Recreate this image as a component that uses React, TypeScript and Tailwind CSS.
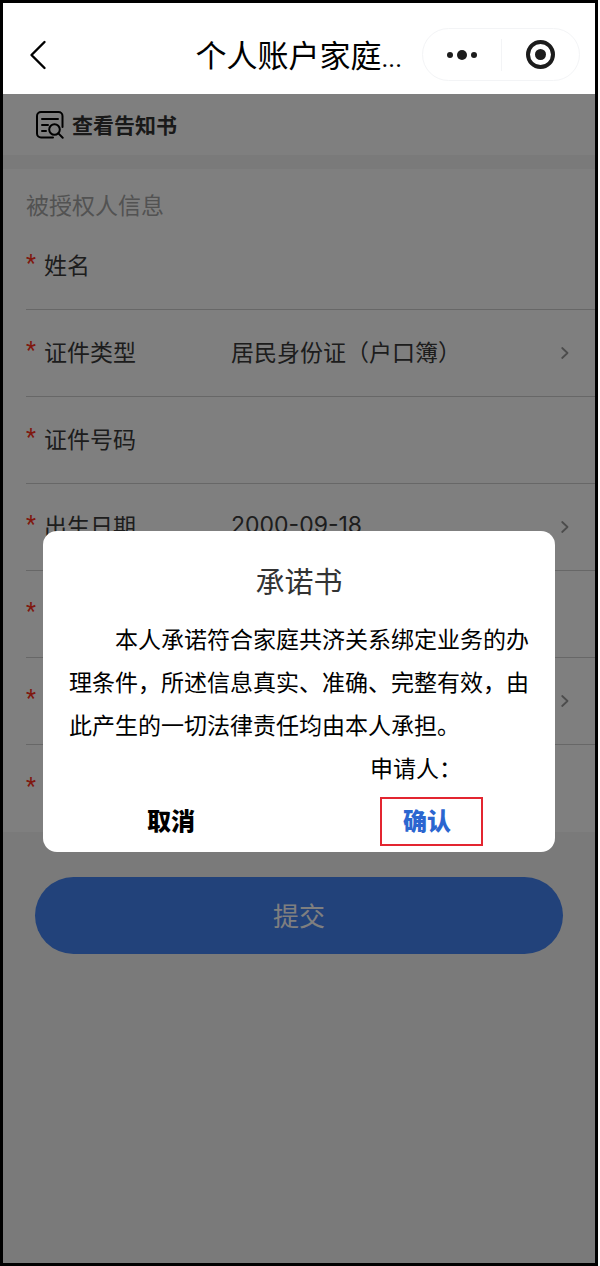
import React, { useState } from 'react';

const BackIcon = () => (
  <svg width="18" height="30" viewBox="0 0 18 30" fill="none" stroke="#000" strokeWidth="2.4" strokeLinecap="round" strokeLinejoin="round">
    <path d="M15.5 2 L2.5 15 L15.5 28" />
  </svg>
);

const NoticeIcon = () => (
  <svg width="28" height="28" viewBox="0 0 28 28" fill="none" stroke="#000" strokeWidth="2" strokeLinecap="round" strokeLinejoin="round">
    <path d="M17 26.5H5a4 4 0 0 1-4-4V5a4 4 0 0 1 4-4h17.5a4 4 0 0 1 4 4v11" />
    <path d="M6 8h16M6 14h6M6 20h4" />
    <circle cx="18.5" cy="18.5" r="5.3" />
    <path d="M22.4 22.4 L26.7 26.7" />
  </svg>
);

const ArrowIcon = () => (
  <svg width="8" height="12" viewBox="0 0 8 12" fill="none" stroke="#999" strokeWidth="1.8" strokeLinecap="round" strokeLinejoin="round" className="shrink-0">
    <path d="M1.2 1 L6.5 6 L1.2 11" />
  </svg>
);

type RowProps = {
  id: string;
  label?: string;
  arrow?: boolean;
  last?: boolean;
  children?: React.ReactNode;
};

const Row = ({ id, label, arrow, last, children }: RowProps) => (
  <div className={`ml-[23px] flex h-[87px] items-center pr-[26px] ${last ? '' : 'border-b border-[#cfcfcf]'}`}>
    <label htmlFor={id} className="flex w-[205px] shrink-0 items-center gap-2 pb-1">
      <span className="w-[10px] font-[Roboto,sans-serif] text-[#ff3020]">*</span>
      <span>{label}</span>
    </label>
    <div className="min-w-0 flex-1 pb-1">{children}</div>
    {arrow && <ArrowIcon />}
  </div>
);

const fieldClass = 'block w-full appearance-none bg-transparent outline-none';

const App = () => {
  const [open, setOpen] = useState(true);
  const [name, setName] = useState('');
  const [idType, setIdType] = useState('居民身份证（户口簿）');
  const [idNumber, setIdNumber] = useState('');
  const [birthday, setBirthday] = useState('2000-09-18');

  return (
    <div lang="zh-CN" className="min-h-screen bg-white pr-0.5 font-['Noto_Sans_CJK_SC',sans-serif]">
      <div className="flex min-h-screen flex-col border-3 border-black">
        <header className="flex h-[91px] items-center pt-3 pr-[15px] pl-[26px]">
          <button type="button" aria-label="返回">
            <BackIcon />
          </button>
          <h1 className="mr-5 ml-auto pt-0.5 text-[31px] leading-10 text-black">
            个人账户家庭<span className="font-[Roboto,sans-serif] text-[26px]">...</span>
          </h1>
          <div className="flex h-[53px] w-[158px] items-center rounded-full border border-gray-100">
            <button type="button" aria-label="更多" className="flex flex-1 items-center justify-center gap-1">
              <span className="size-1.5 rounded-full bg-[#1c1c1c]" />
              <span className="size-2.5 rounded-full bg-[#1c1c1c]" />
              <span className="size-1.5 rounded-full bg-[#1c1c1c]" />
            </button>
            <span className="h-8 w-px bg-gray-100" />
            <button type="button" aria-label="关闭" className="flex flex-1 items-center justify-center">
              <span className="flex size-[29px] items-center justify-center rounded-full border-4 border-[#1c1c1c]">
                <span className="size-[11px] rounded-full bg-[#1c1c1c]" />
              </span>
            </button>
          </div>
        </header>

        <main className="relative flex-1 bg-[#f5f5f5]">
          <div className="flex h-[61px] items-center bg-white pl-[33px]">
            <a href="#notice" className="flex items-center gap-2 text-[21px] font-bold text-[#333]">
              <NoticeIcon />
              查看告知书
            </a>
          </div>

          <form onSubmit={(e) => { e.preventDefault(); setOpen(true); }}>
            <section className="mt-[14px] bg-white text-[23px] leading-[34px] text-[#3a3a3a]">
              <h2 className="h-[54px] pt-[18px] pl-[23px] text-[#a5a5a5]">被授权人信息</h2>
              <Row id="name" label="姓名">
                <input id="name" value={name} onChange={(e) => setName(e.target.value)} className={fieldClass} />
              </Row>
              <Row id="idType" label="证件类型" arrow>
                <select id="idType" value={idType} onChange={(e) => setIdType(e.target.value)} className={fieldClass}>
                  <option>居民身份证（户口簿）</option>
                </select>
              </Row>
              <Row id="idNumber" label="证件号码">
                <input id="idNumber" value={idNumber} onChange={(e) => setIdNumber(e.target.value)} className={fieldClass} />
              </Row>
              <Row id="birthday" label="出生日期" arrow>
                <input id="birthday" value={birthday} onChange={(e) => setBirthday(e.target.value)} className={`${fieldClass} font-[Inter,sans-serif]`} />
              </Row>
              <Row id="field5" />
              <Row id="field6" arrow />
              <Row id="field7" last />
            </section>

            <div className="px-8 pt-[45px]">
              <button type="submit" className="h-[77px] w-full rounded-full bg-[#4484f4] pb-0.5 text-[26px] text-white">提交</button>
            </div>
          </form>

          {open && (
            <div className="absolute inset-0 flex items-center bg-black/50 px-10 pt-[26px]">
              <div role="dialog" aria-modal="true" aria-labelledby="promise" className="w-full rounded-[14px] bg-white">
                <h2 id="promise" className="flex h-[86px] items-center justify-center pt-[14px] text-[29px] text-[#333]">承诺书</h2>
                <div className="px-[26px] text-[23px] leading-[43px] text-black">
                  <p className="indent-[46px]">本人承诺符合家庭共济关系绑定业务的办理条件，所述信息真实、准确、完整有效，由此产生的一切法律责任均由本人承担。</p>
                  <p className="flex justify-end pr-[67px]">申请人：</p>
                </div>
                <div className="flex h-[63px] text-[24px] font-black">
                  <button type="button" onClick={() => setOpen(false)} className="flex-1 pb-0.5 text-black">取消</button>
                  <button type="button" onClick={() => setOpen(false)} className="relative flex-1 pb-0.5 text-[#2b66d0]">
                    确认
                    <span className="absolute top-2 right-[72px] h-[49px] w-[103px] border-2 border-[#e32530]" />
                  </button>
                </div>
              </div>
            </div>
          )}
        </main>
      </div>
    </div>
  );
};

export default App;
